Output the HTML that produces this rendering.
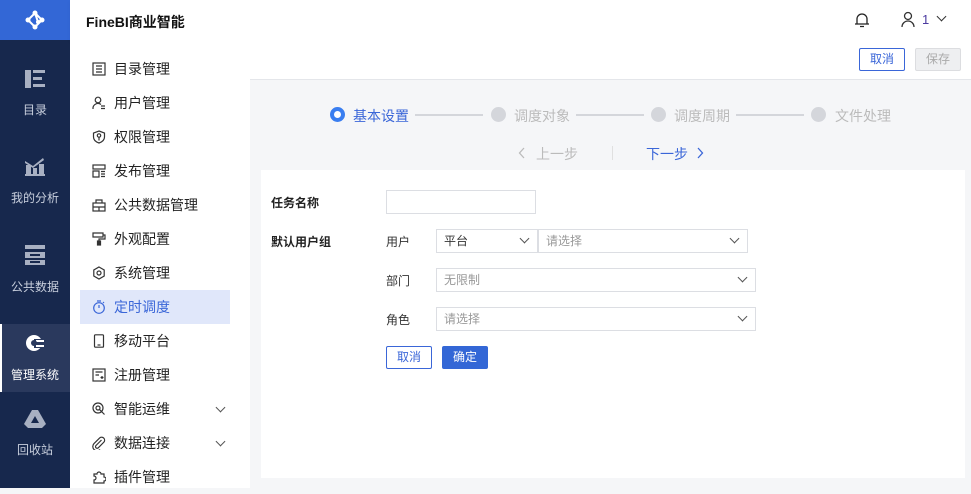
<!DOCTYPE html>
<html><head><meta charset="utf-8"><style>
*{margin:0;padding:0;box-sizing:border-box}
body{width:971px;height:488px;overflow:hidden;font-family:"Liberation Sans","Noto Sans CJK SC",sans-serif;font-size:13px;color:#333;background:#f5f6f8;position:relative}
.abs{position:absolute}
#nav{left:0;top:0;width:70px;height:488px;background:#17284d}
#logo{left:0;top:0;width:70px;height:40px;background:#3367d6}
.ni{position:absolute;left:0;width:70px;text-align:center;color:#c8cfdd;font-size:12px}
.ni svg{display:block;margin:0 auto 13px}
#side{left:70px;top:40px;width:180px;height:448px;background:#fff}
.mi{position:absolute;left:10px;width:150px;height:34px;line-height:34px;padding-left:34px;font-size:14px;color:#222}
.mi svg{position:absolute;left:12px;top:10px}
.mi.act{background:#e0e7fa;color:#3a66d8}
.chev{position:absolute;right:6px;top:12px;width:7px;height:7px;border-right:1.3px solid #555;border-bottom:1.3px solid #555;transform:rotate(45deg)}
#top{left:70px;top:0;width:901px;height:40px;background:#fff;box-shadow:0 2px 4px rgba(0,0,0,.05)}
.btn{position:absolute;height:23px;line-height:21px;text-align:center;font-size:12px;border-radius:2px}
.sel{position:absolute;height:24px;border:1px solid #dcdee3;background:#fff;font-size:12px;line-height:22px;padding-left:7px;color:#999}
.sel b{position:absolute;right:9px;top:5px;width:7px;height:7px;border-right:1.3px solid #555;border-bottom:1.3px solid #555;transform:rotate(45deg)}
.dot{position:absolute;width:15px;height:15px;border-radius:50%;background:#d4d6db}
.line{position:absolute;height:2px;background:#d4d6db}
.st{position:absolute;font-size:14px;color:#bbb}
</style></head><body>
<div id="nav" class="abs">
 <div id="logo" class="abs"><svg width="70" height="40"><g stroke="#fff" stroke-width="2" fill="none"><path d="M28 20 L35 13 L42 20 L35 27 Z M35 13 L38 22 L42 20"/></g><g fill="#fff"><circle cx="28" cy="20" r="2.5"/><circle cx="35" cy="13" r="2.5"/><circle cx="42" cy="20" r="2.5"/><circle cx="35" cy="27" r="2.5"/><circle cx="38" cy="22" r="2"/></g></svg></div>
 <div class="ni" style="top:70px"><svg width="20" height="18"><g fill="#a8b0c2"><rect x="0" y="0" width="6" height="18"/><rect x="8" y="0" width="12" height="3"/><rect x="8" y="7" width="9" height="3"/><rect x="8" y="14" width="12" height="3"/></g></svg>目录</div>
 <div class="ni" style="top:158px"><svg width="20" height="18"><g fill="#a8b0c2"><rect x="0" y="16" width="20" height="2"/><rect x="1" y="7" width="5" height="9"/><rect x="8" y="10" width="4" height="6"/><rect x="14" y="6" width="5" height="10"/><path d="M0 3 L8 8 L18 0 L19 2 L8 10 L0 5Z"/></g></svg>我的分析</div>
 <div class="ni" style="top:245px"><svg width="20" height="20"><g fill="#a8b0c2"><rect x="0" y="0" width="20" height="4"/><rect x="0" y="7" width="20" height="6"/><rect x="0" y="15" width="20" height="5"/></g><rect x="5" y="9" width="10" height="2" fill="#17284d"/><rect x="5" y="16" width="10" height="2" fill="#17284d"/></svg>公共数据</div>
 <div class="abs" style="left:0;top:324px;width:70px;height:68px;background:#2a395d;border-left:2px solid #fff"></div>
 <div class="ni" style="top:333px;color:#fff"><svg width="20" height="20"><circle cx="9" cy="10" r="8" fill="#fff"/><rect x="9" y="6" width="11" height="9" fill="#2a395d"/><rect x="11" y="7" width="8" height="2" fill="#fff"/><rect x="11" y="12" width="8" height="2" fill="#fff"/><circle cx="9" cy="10" r="3" fill="#2a395d"/></svg>管理系统</div>
 <div class="ni" style="top:410px"><svg width="22" height="18"><path d="M8 0 L14 0 L22 14 L18 18 L4 18 L0 14Z" fill="#a8b0c2"/><path d="M11 6 L15 13 L7 13Z" fill="#17284d"/></svg>回收站</div>
</div>
<div id="top" class="abs">
 <div class="abs" style="left:16px;top:12px;font-size:14px;font-weight:bold;color:#111">FineBI商业智能</div>
 <svg class="abs" style="left:784px;top:12px" width="16" height="16"><path d="M3 12 L3 7 A5 5 0 0 1 13 7 L13 12 Z M1 12 L15 12 M6 14.5 L10 14.5" stroke="#222" stroke-width="1.3" fill="none"/></svg>
 <svg class="abs" style="left:830px;top:11px" width="16" height="17"><circle cx="8" cy="5" r="3.5" stroke="#333" stroke-width="1.3" fill="none"/><path d="M2 16 A6 6 0 0 1 14 16" stroke="#333" stroke-width="1.3" fill="none"/></svg>
 <div class="abs" style="left:852px;top:12px;font-size:13px;color:#4b3aa0">1</div>
 <div class="abs" style="left:868px;top:13px;width:7px;height:7px;border-right:1.3px solid #333;border-bottom:1.3px solid #333;transform:rotate(45deg)"></div>
</div>
<div id="side" class="abs">
 <div class="mi" style="top:12px"><svg width="14" height="14" fill="none" stroke="#333" stroke-width="1.2"><rect x="1" y="1" width="12" height="12"/><path d="M4 4H10M4 7H10M4 10H10"/></svg>目录管理</div>
 <div class="mi" style="top:46px"><svg width="14" height="14" fill="none" stroke="#333" stroke-width="1.2"><circle cx="6" cy="4" r="2.8"/><path d="M1 13 A5 5 0 0 1 9 8.5 M9 10H13M9 12.5H13"/></svg>用户管理</div>
 <div class="mi" style="top:80px"><svg width="14" height="14" fill="none" stroke="#333" stroke-width="1.2"><path d="M7 1 L12.5 3 V7 C12.5 10 10 12 7 13 C4 12 1.5 10 1.5 7 V3Z"/><circle cx="7" cy="5.5" r="1.7"/><path d="M7 7.2V10.5"/></svg>权限管理</div>
 <div class="mi" style="top:114px"><svg width="14" height="14" fill="none" stroke="#333" stroke-width="1.2"><rect x="1" y="1" width="12" height="4"/><path d="M1 7H7V13H1ZM9 7.5H13M9 10H13M9 12.5H13"/></svg>发布管理</div>
 <div class="mi" style="top:148px"><svg width="14" height="14" fill="none" stroke="#333" stroke-width="1.2"><rect x="1" y="5" width="12" height="8"/><path d="M4 5V2H10V5M1 9H13M7 9V13"/></svg>公共数据管理</div>
 <div class="mi" style="top:182px"><svg width="14" height="14" fill="none" stroke="#333" stroke-width="1.2"><path d="M1 1H11V5H1ZM11 3H13V7H7V9"/><rect x="5.5" y="9" width="3" height="4" fill="#333"/></svg>外观配置</div>
 <div class="mi" style="top:216px"><svg width="14" height="14" fill="none" stroke="#333" stroke-width="1.2"><path d="M7 1 L12.2 4 V10 L7 13 L1.8 10 V4Z"/><circle cx="7" cy="7" r="2"/></svg>系统管理</div>
 <div class="mi act" style="top:250px"><svg width="14" height="14" fill="none" stroke="#3a66d8" stroke-width="1.2"><circle cx="7" cy="8" r="5.3"/><path d="M5 1H9M7 8V5M11 3L12 2"/></svg>定时调度</div>
 <div class="mi" style="top:284px"><svg width="14" height="14" fill="none" stroke="#333" stroke-width="1.2"><rect x="2.5" y="0.8" width="9" height="12.4" rx="1"/><path d="M5.5 11H8.5"/></svg>移动平台</div>
 <div class="mi" style="top:318px"><svg width="14" height="14" fill="none" stroke="#333" stroke-width="1.2"><rect x="1" y="1" width="12" height="12"/><path d="M3.5 4H10.5M3.5 7H7M8.5 9.5H11.5M10 8V11"/></svg>注册管理</div>
 <div class="mi" style="top:352px"><svg width="14" height="14" fill="none" stroke="#333" stroke-width="1.2"><circle cx="6" cy="6" r="5"/><circle cx="6" cy="6" r="2"/><path d="M7.5 7.5L12.5 12.5"/></svg>智能运维<span class="chev"></span></div>
 <div class="mi" style="top:386px"><svg width="14" height="14" fill="none" stroke="#333" stroke-width="1.2"><path d="M9.5 4 L4 9.5 A1.6 1.6 0 0 0 6.3 11.8 L12 6 A3 3 0 0 0 7.8 1.8 L2 7.6 A4.2 4.2 0 0 0 8 13.5"/></svg>数据连接<span class="chev"></span></div>
 <div class="mi" style="top:420px"><svg width="14" height="14" fill="none" stroke="#333" stroke-width="1.2"><path d="M2 4H5A2 2 0 0 1 9 4H12V7A2 2 0 0 1 12 11V13H2V10A2 2 0 0 0 2 6Z"/></svg>插件管理</div>
</div>
<div class="abs" style="left:250px;top:40px;width:721px;height:40px;background:#fff;border-bottom:1px solid #e4e6ea"></div>
<div class="btn" style="left:859px;top:48px;width:46px;border:1px solid #3a66d8;color:#3a66d8;background:#fff">取消</div>
<div class="btn" style="left:915px;top:48px;width:46px;border:1px solid #dcdde0;color:#aaa;background:#eeeff1">保存</div>
<div class="abs" style="left:330px;top:107px;width:15px;height:15px;border-radius:50%;border:4px solid #3a7ef0;background:#fff"></div>
<div class="st" style="left:353px;top:106px;color:#3a66d8">基本设置</div>
<div class="line" style="left:415px;top:114px;width:68px"></div>
<div class="dot" style="left:491px;top:107px"></div><div class="st" style="left:514px;top:106px">调度对象</div>
<div class="line" style="left:576px;top:114px;width:68px"></div>
<div class="dot" style="left:651px;top:107px"></div><div class="st" style="left:674px;top:106px">调度周期</div>
<div class="line" style="left:736px;top:114px;width:68px"></div>
<div class="dot" style="left:811px;top:107px"></div><div class="st" style="left:835px;top:106px">文件处理</div>
<svg class="abs" style="left:518px;top:147px" width="8" height="12"><path d="M6 1L1.5 6L6 11" stroke="#bbb" stroke-width="1.3" fill="none"/></svg>
<div class="st" style="left:536px;top:144px;color:#bbb">上一步</div>
<div class="abs" style="left:612px;top:146px;width:1px;height:14px;background:#e0e0e0"></div>
<div class="st" style="left:646px;top:144px;color:#3a66d8">下一步</div>
<svg class="abs" style="left:696px;top:147px" width="8" height="12"><path d="M2 1L6.5 6L2 11" stroke="#3a66d8" stroke-width="1.3" fill="none"/></svg>
<div class="abs" style="left:261px;top:170px;width:704px;height:308px;background:#fff"></div>
<div class="abs" style="left:271px;top:194px;font-size:12px;font-weight:bold;color:#222">任务名称</div>
<div class="abs" style="left:386px;top:190px;width:150px;height:24px;border:1px solid #dcdee3"></div>
<div class="abs" style="left:271px;top:233px;font-size:12px;font-weight:bold;color:#222">默认用户组</div>
<div class="abs" style="left:386px;top:233px;font-size:12px">用户</div>
<div class="sel" style="left:436px;top:229px;width:102px;color:#333">平台<b></b></div>
<div class="sel" style="left:538px;top:229px;width:210px">请选择<b></b></div>
<div class="abs" style="left:386px;top:272px;font-size:12px">部门</div>
<div class="sel" style="left:436px;top:268px;width:320px">无限制<b></b></div>
<div class="abs" style="left:386px;top:311px;font-size:12px">角色</div>
<div class="sel" style="left:436px;top:307px;width:320px">请选择<b></b></div>
<div class="btn" style="left:386px;top:346px;width:46px;border:1px solid #3a66d8;color:#3a66d8;background:#fff">取消</div>
<div class="btn" style="left:442px;top:346px;width:46px;background:#3367d6;color:#fff;border:1px solid #3367d6">确定</div>
</body></html>
